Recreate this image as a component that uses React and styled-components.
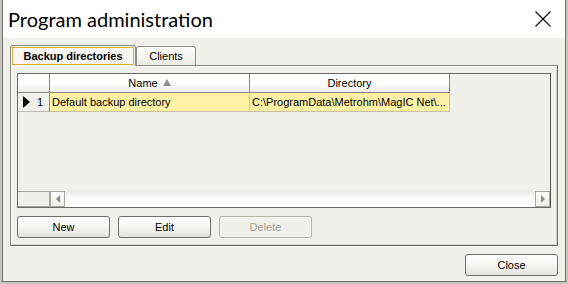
import React from 'react';
import styled, { createGlobalStyle } from 'styled-components';

const GlobalStyle = createGlobalStyle`
  html, body {
    margin: 0;
    padding: 0;
    background: #c9c6bd;
  }
  body {
    font-family: "Liberation Sans", Tahoma, sans-serif;
    font-size: 11px;
    color: #000;
  }
`;

const Window = styled.div`
  margin-left: 2px;
  width: 562px;
  height: 281px;
  display: flex;
  flex-direction: column;
  background: #f1f0ea;
  border: 1px solid #6e6e6e;
  border-top: none;
  overflow: hidden;
`;

const TitleBar = styled.div`
  height: 37px;
  flex: none;
  background: #fff;
  display: flex;
  align-items: center;
  justify-content: space-between;
  padding: 0 14px 1px 5px;
`;

const Title = styled.div`
  font-family: Lato, "Liberation Sans", sans-serif;
  font-size: 20px;
  color: #000;
`;

const CloseIcon = styled.svg`
  width: 16px;
  height: 16px;
  display: block;
`;

const Body = styled.div`
  flex: 1;
  display: flex;
  flex-direction: column;
  padding: 6px 7px 6px 7px;
`;

const TabStrip = styled.div`
  display: flex;
  align-items: flex-end;
  height: 21px;
`;

const Tab = styled.div`
  width: ${p => p.$w}px;
  height: ${p => (p.$active ? '21px' : '19px')};
  box-sizing: border-box;
  padding: ${p => (p.$active ? '1px 1px 0 1px' : '0')};
  display: flex;
  align-items: stretch;
  font-weight: ${p => (p.$active ? 'bold' : 'normal')};
  background: ${p => (p.$active ? '#f7f6f0' : 'linear-gradient(#ffffff, #ecebe4)')};
  border: 1px solid #8e8e88;
  border-bottom: none;
  border-radius: 3px 3px 0 0;
  position: relative;
  z-index: ${p => (p.$active ? 1 : 0)};
  margin-bottom: ${p => (p.$active ? '-1px' : '0')};
`;

const TabLabel = styled.div`
  flex: 1;
  display: flex;
  align-items: center;
  justify-content: center;
  box-sizing: border-box;
  border: 1px solid ${p => (p.$focus ? '#d9ad3c' : 'transparent')};
  margin-bottom: ${p => (p.$focus ? '1px' : '0')};
`;

const Panel = styled.div`
  box-sizing: border-box;
  height: 181px;
  border: 1px solid #8a8a80;
  border-right-color: #6e6e66;
  border-bottom-color: #6e6e66;
  box-shadow: inset 1px 1px 0 #fafaf6, inset -1px -1px 0 #d6d5cc;
  padding: 7px 6px 7px 6px;
  display: flex;
  flex-direction: column;
`;

const Grid = styled.div`
  height: 137px;
  box-sizing: border-box;
  border: 1px solid #6b6b65;
  border-right-color: #55554f;
  background: #f1f0ea;
  display: flex;
  flex-direction: column;
`;

const GridRow = styled.div`
  display: flex;
  height: 19px;
  flex: none;
`;

const HeaderCell = styled.div`
  width: ${p => p.$w}px;
  box-sizing: border-box;
  background: linear-gradient(#ffffff 0%, #fbfbf9 60%, #ecebe6 100%);
  border-right: 1px solid #8a8a84;
  border-bottom: 1px solid #8a8a84;
  display: flex;
  align-items: center;
  justify-content: center;
  gap: 5px;
`;

const SortArrow = styled.span`
  width: 0;
  height: 0;
  border-left: 4px solid transparent;
  border-right: 4px solid transparent;
  border-bottom: 7px solid #8f8f8f;
  margin-top: -1px;
`;

const RowHeader = styled.div`
  width: 32px;
  box-sizing: border-box;
  background: #f1f0ea;
  border-right: 1px solid #8a8a84;
  border-bottom: 1px solid #bdbdb5;
  display: flex;
  align-items: center;
  padding-left: 5px;
  gap: 7px;
`;

const RowPointer = styled.span`
  width: 0;
  height: 0;
  border-top: 6px solid transparent;
  border-bottom: 6px solid transparent;
  border-left: 7px solid #000;
`;

const DataCell = styled.div`
  width: ${p => p.$w}px;
  box-sizing: border-box;
  background: #fff1a6;
  border-right: 1px solid #c9c0a0;
  border-bottom: 1px solid #c9c0a0;
  padding-left: 2px;
  display: flex;
  align-items: center;
  white-space: nowrap;
  overflow: hidden;
`;

const GridFill = styled.div`
  flex: 1;
`;

const HScroll = styled.div`
  height: 16px;
  flex: none;
  display: flex;
  background: linear-gradient(#ecebe6, #fbfbf9 40%, #ffffff);
`;

const ScrollCorner = styled.div`
  width: 32px;
  box-sizing: border-box;
  border: 1px solid #a8a8a0;
  border-left: none;
  background: #f1f0ea;
`;

const ScrollTrack = styled.div`
  flex: 1;
`;

const ScrollButton = styled.div`
  width: 15px;
  box-sizing: border-box;
  border: 1px solid #a8a8a0;
  background: linear-gradient(#ffffff, #eeeee8);
  display: flex;
  align-items: center;
  justify-content: center;
`;

const ScrollArrow = styled.span`
  width: 0;
  height: 0;
  border-top: 4px solid transparent;
  border-bottom: 4px solid transparent;
  ${p =>
    p.$dir === 'left'
      ? 'border-right: 4px solid #8c8c80;'
      : 'border-left: 4px solid #8c8c80;'}
`;

const ButtonRow = styled.div`
  display: flex;
  gap: 8px;
  margin-top: 8px;
`;

const Button = styled.button`
  width: 93px;
  height: 22px;
  box-sizing: border-box;
  font-family: "Liberation Sans", Tahoma, sans-serif;
  font-size: 11px;
  color: ${p => (p.disabled ? '#a3a39a' : '#000')};
  background: ${p =>
    p.disabled ? '#f1f0ea' : 'linear-gradient(#ffffff 0%, #f6f6f2 50%, #e4e3dc 100%)'};
  border: 1px solid ${p => (p.disabled ? '#b6b6ac' : '#6f6f6a')};
  border-radius: 3px;
  padding: 0;
`;

const Footer = styled.div`
  display: flex;
  justify-content: flex-end;
  margin-top: 8px;
`;

const App = () => {
  return (
    <>
      <GlobalStyle />
      <Window>
        <TitleBar>
          <Title>Program administration</Title>
          <CloseIcon viewBox="0 0 16 16">
            <path d="M0.5 0.5 L15.5 15.5 M15.5 0.5 L0.5 15.5" stroke="#000" strokeWidth="1.1" fill="none" />
          </CloseIcon>
        </TitleBar>
        <Body>
          <TabStrip>
            <Tab $active $w={126}>
              <TabLabel $focus>Backup directories</TabLabel>
            </Tab>
            <Tab $w={60}>
              <TabLabel>Clients</TabLabel>
            </Tab>
          </TabStrip>
          <Panel>
            <Grid>
              <GridRow>
                <HeaderCell $w={32} />
                <HeaderCell $w={200}>
                  Name <SortArrow />
                </HeaderCell>
                <HeaderCell $w={200}>Directory</HeaderCell>
              </GridRow>
              <GridRow>
                <RowHeader>
                  <RowPointer />1
                </RowHeader>
                <DataCell $w={200}>Default backup directory</DataCell>
                <DataCell $w={200}>C:\ProgramData\Metrohm\MagIC Net\...</DataCell>
              </GridRow>
              <GridFill />
              <HScroll>
                <ScrollCorner />
                <ScrollButton>
                  <ScrollArrow $dir="left" />
                </ScrollButton>
                <ScrollTrack />
                <ScrollButton>
                  <ScrollArrow $dir="right" />
                </ScrollButton>
              </HScroll>
            </Grid>
            <ButtonRow>
              <Button>New</Button>
              <Button>Edit</Button>
              <Button disabled>Delete</Button>
            </ButtonRow>
          </Panel>
          <Footer>
            <Button>Close</Button>
          </Footer>
        </Body>
      </Window>
    </>
  );
};

export default App;
